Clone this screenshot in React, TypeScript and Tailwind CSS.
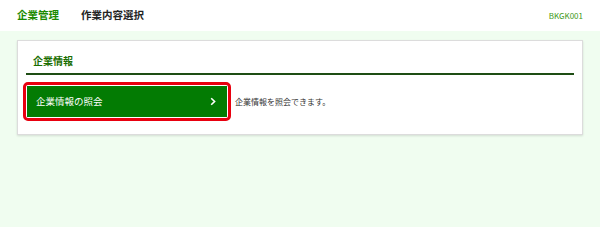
const App = () => {
  return (
    <div className="w-[600px] h-[227px] bg-[#f0fdf0] font-['Noto_Sans_CJK_JP','Noto_Sans',sans-serif] flex flex-col">
      <header className="h-[31px] bg-white flex items-center px-[17px] shrink-0">
        <span className="text-[10.5px] font-bold text-[#1a8a00] leading-none">企業管理</span>
        <span className="ml-[22px] text-[10.5px] font-bold text-[#222] leading-none">作業内容選択</span>
        <span className="ml-auto text-[8px] text-[#3f9a1a] leading-none">BKGK001</span>
      </header>

      <main className="px-[17px] pt-[9px]">
        <section className="bg-white border border-[#dcdcdc] shadow-[0_1px_2px_rgba(0,0,0,0.12)] pl-[8px] pr-[8px] pt-[13px] pb-[13px]">
          <h2 className="pl-[7px] pb-[5px] text-[10px] font-bold text-[#1a6e00] leading-[14px] border-b-2 border-[#1e4d14]">
            企業情報
          </h2>

          <div className="mt-[7px] flex items-center">
            <div className="-ml-[3px] border-[3px] border-[#e8000f] rounded-[5px] p-px">
              <button className="w-[200px] h-[31px] bg-[#037b03] flex items-center pl-[9px] pr-[10px] text-white">
                <span className="text-[9.5px] leading-none">企業情報の照会</span>
                <svg className="ml-auto" width="8" height="9" viewBox="0 0 8 9" fill="none">
                  <path d="M2.2 1.2 L5.6 4.5 L2.2 7.8" stroke="white" strokeWidth="1.6" />
                </svg>
              </button>
            </div>
            <p className="ml-[4px] text-[8px] text-[#333] leading-none">企業情報を照会できます。</p>
          </div>
        </section>
      </main>
    </div>
  );
};

export default App;
